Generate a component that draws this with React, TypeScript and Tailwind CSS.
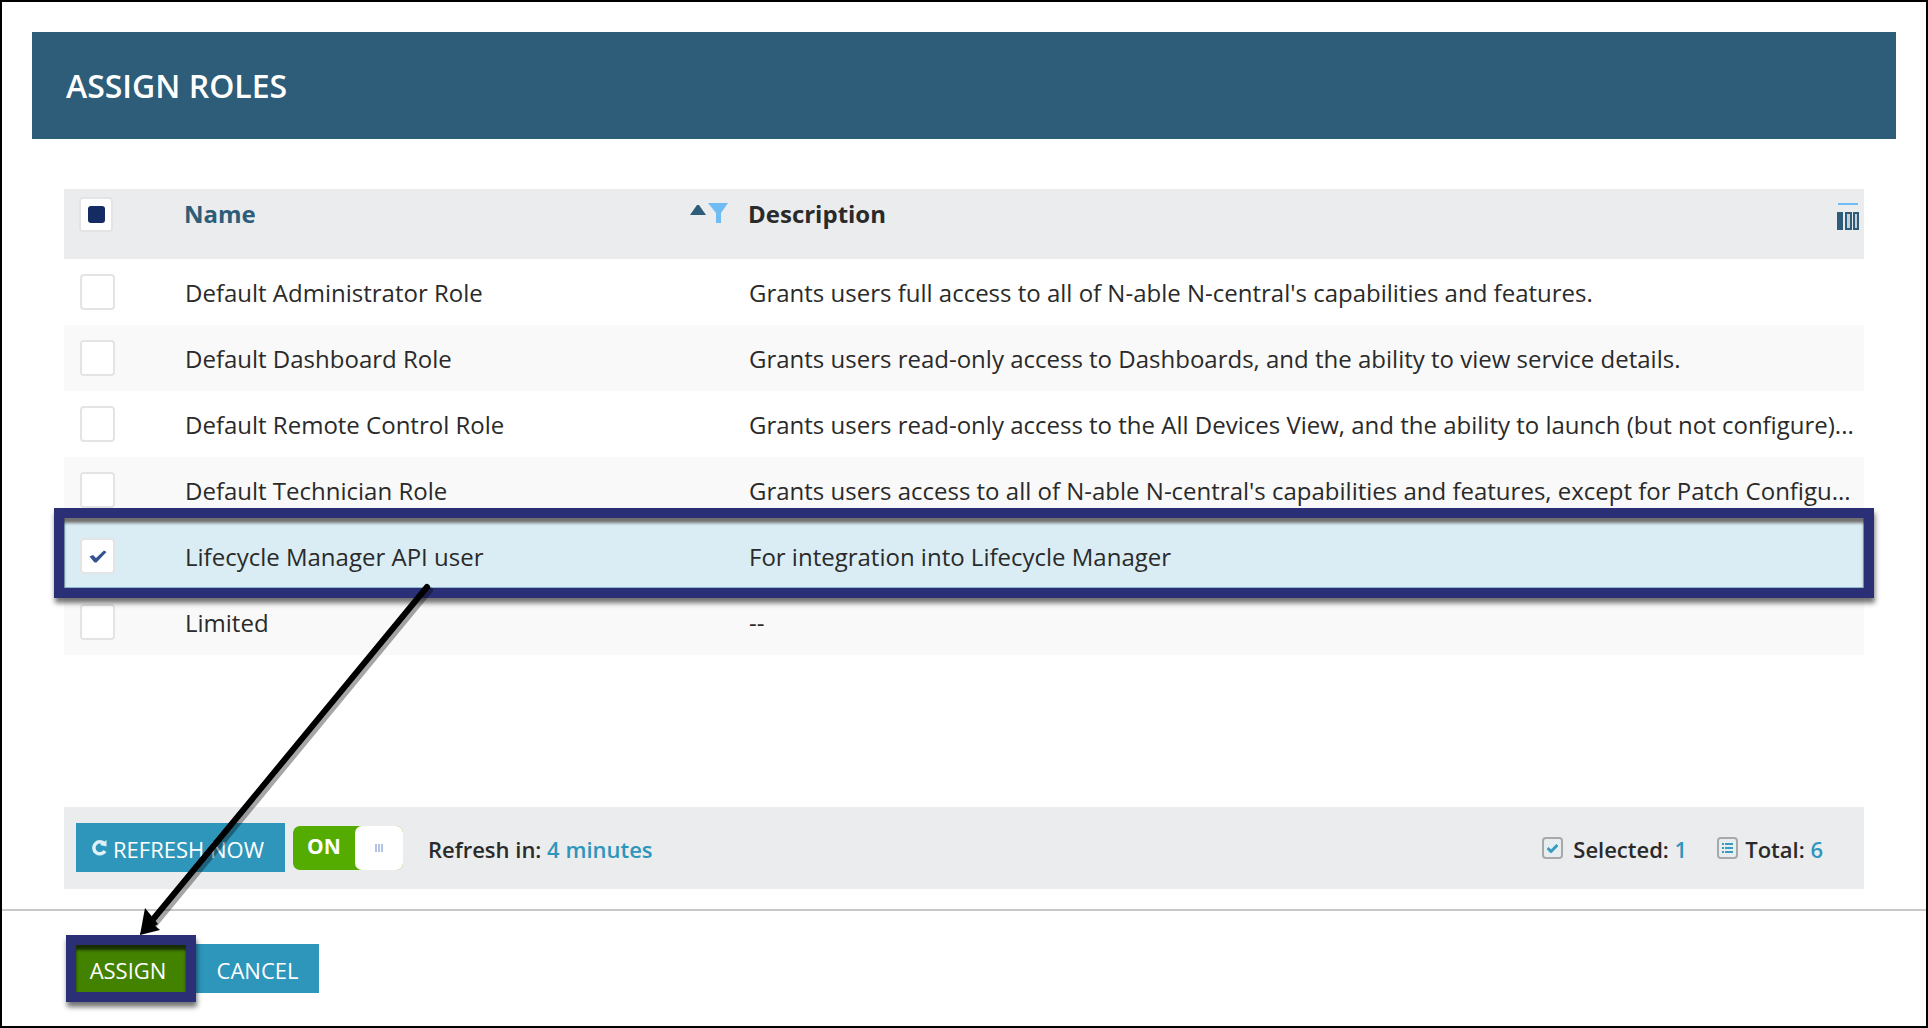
const roles = [
  { name: "Default Administrator Role", desc: "Grants users full access to all of N-able N-central's capabilities and features." },
  { name: "Default Dashboard Role", desc: "Grants users read-only access to Dashboards, and the ability to view service details." },
  { name: "Default Remote Control Role", desc: "Grants users read-only access to the All Devices View, and the ability to launch (but not configure)..." },
  { name: "Default Technician Role", desc: "Grants users access to all of N-able N-central's capabilities and features, except for Patch Configu..." },
  { name: "Lifecycle Manager API user", desc: "For integration into Lifecycle Manager", selected: true },
  { name: "Limited", desc: "--" },
];

const Checkbox = ({ checked }: { checked?: boolean }) => (
  <div className="w-[35px] h-[36px] rounded-[4px] bg-white border-2 border-[#e4e4e4] flex items-center justify-center">
    {checked && (
      <svg width="18" height="13" viewBox="0 0 18 13">
        <path d="M0.5 6.5 L4 5 L7 8 L15 0.5 L17.5 2 L7.5 12.5 L5.5 12.5 Z" fill="#34528f" />
      </svg>
    )}
  </div>
);

const Arrow = () => (
  <svg className="absolute left-0 top-0 z-20 pointer-events-none" width="1924" height="1024" viewBox="2 2 1924 1024">
    <path d="M427 587 L152 921" stroke="#000" strokeOpacity="0.35" strokeWidth="6" transform="translate(3 3)" strokeLinecap="round" />
    <path d="M427 587 L150 923" stroke="#000" strokeWidth="6" strokeLinecap="round" />
    <path d="M140 935 L145 908 L158 924 Z" fill="#000" />
    <path d="M140 935 L160 930 L146 918 Z" fill="#000" />
  </svg>
);

export default function App() {
  return (
    <div className="relative w-[1928px] h-[1028px] bg-white border-2 border-black font-['Open_Sans',sans-serif] text-[#2a2a2a] overflow-hidden">
      <Arrow />
      <div className="mx-[30px] mt-[30px] h-[107px] bg-[#2d5d78] flex items-center pl-[34px]">
        <h1 className="text-[32px] font-semibold text-white">ASSIGN ROLES</h1>
      </div>

      <div className="mx-[62px] mt-[50px]">
        <div className="relative h-[70px] bg-[#ebecee]">
          <div className="absolute left-[15px] top-[8px] w-[34px] h-[35px] rounded-[4px] bg-white border-2 border-[#e4e4e4] flex items-center justify-center">
            <div className="w-[17px] h-[17px] rounded-[3px] bg-[#142c63]" />
          </div>
          <span className="absolute left-[120px] top-[7px] text-[24px] font-bold text-[#2d5d78]">Name</span>
          <svg className="absolute left-[626px] top-[14px]" width="38" height="21" viewBox="0 0 38 21">
            <path d="M0 12 L7 2 H9 L16 12 Z" fill="#2d5d78" />
            <path d="M18 0 H38 L31 10 V20 H26 V10 Z" fill="#6fbcf5" />
          </svg>
          <span className="absolute left-[684px] top-[7px] text-[24px] font-bold">Description</span>
          <svg className="absolute left-[1773px] top-[14px]" width="22" height="27" viewBox="0 0 22 27">
            <rect x="1" y="0" width="20" height="2" fill="#6fbcf5" />
            <rect x="0" y="9" width="6" height="18" fill="#2d5d78" />
            <rect x="9" y="10" width="5" height="16" fill="#c3d0d8" stroke="#2d5d78" strokeWidth="2" />
            <rect x="17" y="10" width="4" height="16" fill="#c3d0d8" stroke="#2d5d78" strokeWidth="2" />
          </svg>
        </div>

        {roles.map((role, i) => (
          <div
            key={role.name}
            className={`relative h-[66px] flex items-center ${role.selected ? "bg-[#daedf4]" : i % 2 === 1 || i === 5 ? "bg-[#f9f9f9]" : "bg-white"}`}
          >
            <div className="ml-[16px] w-[105px] shrink-0">
              <Checkbox checked={role.selected} />
            </div>
            <div className="w-[564px] shrink-0 text-[24px] leading-[34px] pt-[1px]">{role.name}</div>
            <div className="text-[24px] leading-[34px] pt-[1px] whitespace-nowrap">{role.desc}</div>
            {role.selected && (
              <div className="absolute -left-[10px] -right-[10px] -top-[15px] -bottom-[9px] z-10 border-[10px] border-[#2b3076] pointer-events-none shadow-[1px_5px_5px_rgba(0,0,0,0.55),inset_0_5px_3px_rgba(0,0,0,0.55),inset_0_-1px_0_#8fb8c8,inset_1px_0_0_#8fb8c8,inset_-1px_0_0_#8fb8c8]" />
            )}
          </div>
        ))}
      </div>

      <div className="mx-[62px] mt-[152px] h-[82px] bg-[#ebecee] flex items-center pl-[12px] pr-[41px]">
        <button className="w-[209px] h-[49px] bg-[#2e96bb] text-white text-[22px] flex items-center pl-[16px] gap-[7px] -mt-[1px]">
          <svg width="15" height="18" viewBox="0 0 15 18">
            <path d="M12.5 5 A6 6 0 1 0 13 12" fill="none" stroke="#dff0f6" strokeWidth="3.5" />
            <path d="M8 6 L14.5 1 V7.5 Z" fill="#dff0f6" />
          </svg>
          <span className="pt-[4px] -ml-[1px]">REFRESH NOW</span>
        </button>
        <div className="ml-[8px] w-[110px] h-[44px] rounded-[7px] bg-[#55ac00] flex">
          <span className="w-[62px] text-center text-white font-bold text-[21px] leading-[40px]">ON</span>
          <div className="w-[48px] bg-white rounded-[7px] flex items-center justify-center gap-[1px]">
            <i className="w-[2px] h-[8px] bg-[#b0c4e8]" />
            <i className="w-[2px] h-[8px] bg-[#b0c4e8]" />
            <i className="w-[2px] h-[8px] bg-[#b0c4e8]" />
          </div>
        </div>
        <div className="ml-[25px] text-[22px] font-semibold pt-[2px]">
          Refresh in: <span className="text-[#2e96bb]">4 minutes</span>
        </div>
        <div className="ml-auto flex items-center text-[22px] font-semibold">
          <div className="w-[21px] h-[22px] rounded-[4px] border-2 border-[#a9a9a9] bg-[#e6eef2] flex items-center justify-center">
            <svg width="11" height="9" viewBox="0 0 11 9">
              <path d="M0.5 4 L4 7.5 L10.5 1" fill="none" stroke="#3a9bc0" strokeWidth="3" />
            </svg>
          </div>
          <span className="ml-[10px] pt-[2px]">Selected: <span className="text-[#2e96bb]">1</span></span>
          <div className="ml-[30px] w-[21px] h-[22px] rounded-[4px] border-2 border-[#a9a9a9] bg-[#e6eef2] flex items-center justify-center">
            <svg width="11" height="10" viewBox="0 0 11 10" fill="#3a9bc0">
              <rect x="0" y="0" width="2" height="2" />
              <rect x="3" y="0" width="8" height="2" />
              <rect x="0" y="4" width="2" height="2" />
              <rect x="3" y="4" width="8" height="2" />
              <rect x="0" y="8" width="2" height="2" />
              <rect x="3" y="8" width="8" height="2" />
            </svg>
          </div>
          <span className="ml-[7px] pt-[2px]">Total: <span className="text-[#2e96bb]">6</span></span>
        </div>
      </div>

      <div className="mt-[20px] h-[2px] bg-[#c8c8c8]" />

      <div className="mt-[33px] ml-[74px] flex">
        <button className="relative w-[120px] h-[49px] bg-[#438200] text-white text-[22px] pr-[16px] pt-[3px]">
          ASSIGN
          <span className="absolute -left-[10px] right-0 -top-[9px] -bottom-[9px] border-[10px] border-[#2b3076] shadow-[1px_5px_5px_rgba(0,0,0,0.55),inset_0_5px_3px_rgba(0,0,0,0.65)]" />
        </button>
        <button className="w-[123px] h-[49px] bg-[#2e96bb] text-white text-[22px] pt-[3px]">CANCEL</button>
      </div>
    </div>
  );
}
